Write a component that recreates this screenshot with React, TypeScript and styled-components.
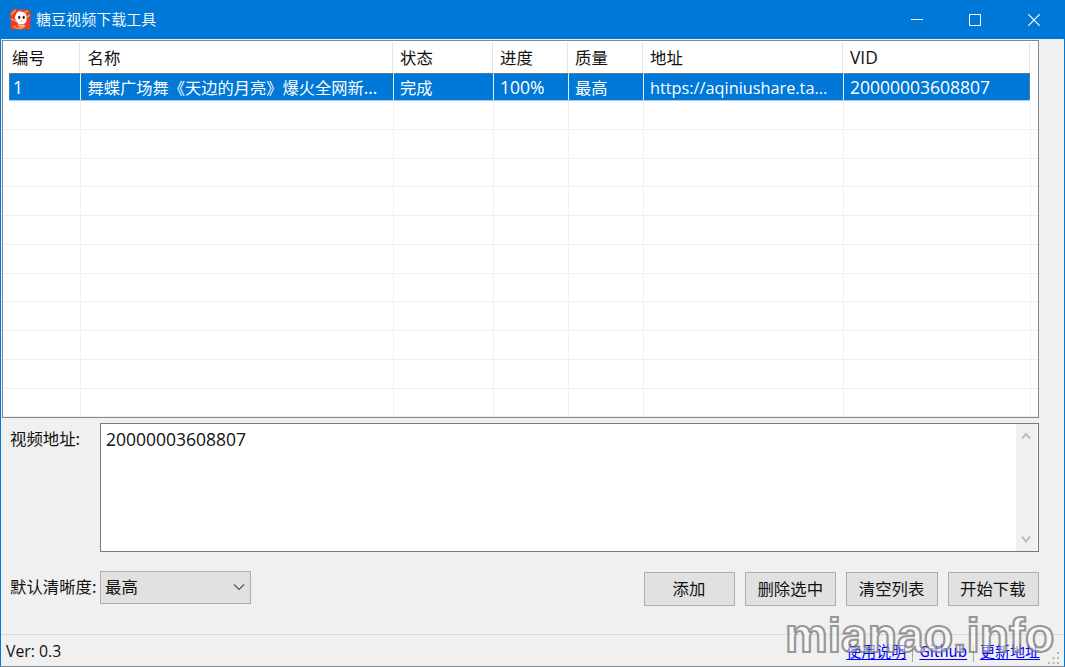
import React from "react";
import styled, { createGlobalStyle } from "styled-components";

const GlobalStyle = createGlobalStyle`
  *, *::before, *::after { box-sizing: border-box; }
  html, body { margin: 0; padding: 0; overflow: hidden; }
`;

const COLUMNS = "71px 312.5px 100px 75px 75px 200px 187px";

const Window = styled.div`
  position: relative;
  display: flex;
  flex-direction: column;
  width: 1065px;
  height: 667px;
  background: #f0f0f0;
  border: 1px solid #0078d7;
  border-top: 0;
  border-bottom-color: #8a8f94;
  font-family: "Noto Sans CJK SC", sans-serif;
  font-size: 16.4px;
  color: #111;
  white-space: nowrap;
`;

const TitleBar = styled.header`
  display: flex;
  align-items: center;
  flex: none;
  height: 39px;
  padding: 0 1px 0 9px;
  background: #0078d7;
  color: #fff;
`;

const Title = styled.h1`
  flex: 1;
  margin: 0 0 0 5px;
  font-size: 15.05px;
  font-weight: 350;
  line-height: 36px;
  height: 38px;
`;

const CaptionButton = styled.button`
  display: grid;
  place-items: center;
  width: 58.4px;
  height: 39px;
  padding: 0;
  border: 0;
  background: none;
  color: #fff;
`;

const Latin = styled.span<{ $size?: number }>`
  font-family: "Open Sans", "Noto Sans", sans-serif;
  font-size: ${(p) => p.$size ?? 17.5}px;
`;

const List = styled.section`
  flex: none;
  width: 1037px;
  height: 378px;
  margin: 1px 0 0 1px;
  border: 1px solid #828790;
  background: #fff;
  overflow: hidden;
`;

const HeaderRow = styled.div`
  display: grid;
  grid-template-columns: ${COLUMNS};
  height: 32px;
  padding: 1px 0 0 6px;
`;

const HeaderCell = styled.div`
  padding-left: 3px;
  border-right: 1px solid #e5e5e5;
  line-height: 30px;
  overflow: hidden;

  & + & { padding-left: 7.5px; }
`;

const BodyRow = styled.div<{ $selected?: boolean }>`
  display: grid;
  grid-template-columns: ${COLUMNS};
  height: ${(p) => (p.$selected ? 28 : 28.75)}px;
  margin-left: ${(p) => (p.$selected ? 6 : 0)}px;
  padding-left: ${(p) => (p.$selected ? 0 : 6)}px;
  width: ${(p) => (p.$selected ? "1021px" : "auto")};
  background: ${(p) => (p.$selected ? "#0078d7" : "#fff")};
  color: #fff;
  border-bottom: 1px solid ${(p) => (p.$selected ? "#a9cdea" : "#efefef")};
  background-clip: padding-box;
`;

const BodyCell = styled.div<{ $selected?: boolean }>`
  padding-left: 3px;
  border-right: 1px solid ${(p) => (p.$selected ? "#e4f1fb" : "#f1f1f1")};
  border-top: ${(p) => (p.$selected ? "1px dotted #b08050" : "0")};
  line-height: 26px;
  margin: 0 -1px 0 1px;
  overflow: hidden;
  font-size: 16.25px;

  & + & { padding-left: 6.5px; }
  &:nth-child(2) { padding-left: 5.5px; }
  &:first-child { margin-left: 0; border-left: ${(p) => (p.$selected ? "1px dotted #b08050" : "0")}; }
  &:last-child { border-right: 1px ${(p) => (p.$selected ? "dotted #b08050" : "solid #f1f1f1")}; margin-right: ${(p) => (p.$selected ? 0 : -1)}px; }
`;

const AddressRow = styled.section`
  display: flex;
  flex: none;
  margin-top: 5px;
  padding-left: 9px;
`;

const Label = styled.label`
  flex: none;
  width: 90px;
  line-height: 30px;
`;

const AddressBox = styled.div`
  display: flex;
  justify-content: space-between;
  width: 939px;
  height: 129px;
  border: 1px solid #7a7a7a;
  background: #fff;
`;

const AddressText = styled.div`
  padding: 0 0 0 5px;
  line-height: 30px;
`;

const ScrollTrack = styled.div`
  display: flex;
  flex-direction: column;
  justify-content: space-between;
  align-items: center;
  width: 21px;
  margin-right: 1px;
  padding: 8px 2px 8px 0;
  background: #f0f0f0;
`;

const ControlsRow = styled.section`
  display: flex;
  align-items: flex-start;
  flex: none;
  height: 82px;
  margin-right: 25px;
  padding: 19px 0 0 9px;
`;

const Select = styled.div`
  display: flex;
  align-items: center;
  justify-content: space-between;
  width: 151px;
  height: 33px;
  padding: 0 5px 2px 4px;
  border: 1px solid #adadad;
  background: #e1e1e1;
  line-height: 29px;
`;

const Buttons = styled.div`
  display: flex;
  gap: 10px;
  margin: 1px 0 0 auto;
`;

const Button = styled.button`
  width: 91.3px;
  height: 34px;
  padding: 0 1px 2px 0;
  border: 1px solid #adadad;
  background: #e1e1e1;
  color: #111;
  font: inherit;
  line-height: 28px;
`;

const StatusBar = styled.footer`
  display: flex;
  align-items: flex-start;
  justify-content: space-between;
  flex: 1;
  border-top: 1px solid #dadada;
  padding: 0 4px 0 5px;
  font-size: 15px;
`;

const Version = styled.span`
  line-height: 31px;
`;

const Links = styled.nav`
  display: flex;
  align-items: center;
  height: 31px;
`;

const Link = styled.a`
  color: #0000ff;
  font-size: 15px;
  line-height: 30px;
  text-decoration: underline 1px;
  text-underline-offset: 2px;
`;

const Divider = styled.i`
  width: 1px;
  height: 17px;
  margin: 5px 6px 0;
  background: #a8a8a8;
`;

const Grip = styled.svg`
  margin: 13px 0 0 7px;
`;

const Watermark = styled.div`
  position: absolute;
  left: 784px;
  top: 609px;
  font-family: "Liberation Sans", sans-serif;
  font-size: 48px;
  font-weight: 700;
  line-height: 54px;
  color: rgba(255, 255, 255, 0.55);
  -webkit-text-stroke: 2.2px rgba(110, 110, 110, 0.7);
  pointer-events: none;
`;

const Logo = () => (
  <svg width="21" height="21" viewBox="0 0 21 21">
    <rect x="0.5" y="0.5" width="20" height="20" rx="3.5" fill="#e93a2c" />
    <path d="M1 6C3 3 4 2 6 1M1 10c3 1 4 1 6 3M3 17c4 3 9 4 12-1M15 3l3-1M17 8l3-2" fill="none" stroke="#f5a13a" strokeWidth="1.5" />
    <path d="M6 5.5C7 2.500 10 1.500 12 3c3-.3 5 2.500 4.600 6 .7 3.500-1.600 6.500-5 6.500S7 13.500 6 11C4.500 9.500 4.600 7 6 5.500Z" fill="#fff" />
    <ellipse cx="9.200" cy="8.300" rx="1.100" ry="1.600" fill="#251718" />
    <ellipse cx="13.700" cy="8.300" rx="1.100" ry="1.600" fill="#251718" />
    <path d="m10.300 11.500 2.400 0-1.200 1.400Z" fill="#ef9c2b" />
    <path d="M8 15.500c1 2 4 2.500 6 .5" fill="none" stroke="#fbd7a8" strokeWidth="1.400" />
  </svg>
);

const Chevron = ({ up, color, width, size }: { up?: boolean; color: string; width: number; size: number }) => (
  <svg width={size} height="8" viewBox={`0 0 ${size} 8`}>
    <path
      d={up ? `M1 6.500 ${size / 2} 2l${size / 2 - 1} 4.500` : `M1 1.500 ${size / 2} 6.500l${size / 2 - 1} -5`}
      fill="none"
      stroke={color}
      strokeWidth={width}
    />
  </svg>
);

const headers = ["编号", "名称", "状态", "进度", "质量", "地址"];
const emptyRows = Array.from({ length: 11 }, (_, i) => i);
const actions = ["添加", "删除选中", "清空列表", "开始下载"];
const dots = [[10, 1], [5.5, 6], [10, 6], [1, 11], [5.5, 11], [10, 11]];

export default function App() {
  return (
    <>
      <GlobalStyle />
      <Window>
        <TitleBar>
          <Logo />
          <Title>糖豆视频下载工具</Title>
          <CaptionButton aria-label="最小化">
            <svg width="12" height="12" viewBox="0 0 12 12"><path d="M0 5.500h12" stroke="currentColor" /></svg>
          </CaptionButton>
          <CaptionButton aria-label="最大化">
            <svg width="12" height="12" viewBox="0 0 12 12"><path d="M.5.5h11v11H.5z" fill="none" stroke="currentColor" /></svg>
          </CaptionButton>
          <CaptionButton aria-label="关闭">
            <svg width="12" height="12" viewBox="0 0 12 12"><path d="m.3.3 11.400 11.400M11.700.3.3 11.700" stroke="currentColor" strokeWidth="1.200" /></svg>
          </CaptionButton>
        </TitleBar>

        <List>
          <HeaderRow>
            {headers.map((h) => <HeaderCell key={h}>{h}</HeaderCell>)}
            <HeaderCell><Latin $size={17.4}>VID</Latin></HeaderCell>
          </HeaderRow>
          <BodyRow $selected>
            <BodyCell $selected><Latin>1</Latin></BodyCell>
            <BodyCell $selected>舞蝶广场舞《天边的月亮》爆火全网新...</BodyCell>
            <BodyCell $selected>完成</BodyCell>
            <BodyCell $selected><Latin $size={17.5}>100%</Latin></BodyCell>
            <BodyCell $selected>最高</BodyCell>
            <BodyCell $selected><Latin $size={16.3}>https://aqiniushare.ta...</Latin></BodyCell>
            <BodyCell $selected><Latin>20000003608807</Latin></BodyCell>
          </BodyRow>
          {emptyRows.map((r) => (
            <BodyRow key={r}>
              {COLUMNS.split(" ").map((_, c) => <BodyCell key={c} />)}
            </BodyRow>
          ))}
        </List>

        <AddressRow>
          <Label>视频地址:</Label>
          <AddressBox>
            <AddressText><Latin>20000003608807</Latin></AddressText>
            <ScrollTrack>
              <Chevron up color="#bcbcbc" width={2} size={10} />
              <Chevron color="#bcbcbc" width={2} size={10} />
            </ScrollTrack>
          </AddressBox>
        </AddressRow>

        <ControlsRow>
          <Label>默认清晰度:</Label>
          <Select>
            最高
            <Chevron color="#555" width={1.2} size={12} />
          </Select>
          <Buttons>
            {actions.map((a) => <Button key={a}>{a}</Button>)}
          </Buttons>
        </ControlsRow>

        <StatusBar>
          <Version><Latin $size={15.8}>Ver: 0.3</Latin></Version>
          <Links>
            <Link>使用说明</Link>
            <Divider />
            <Link>Github</Link>
            <Divider />
            <Link>更新地址</Link>
            <Grip width="13" height="13" viewBox="0 0 13 13">
              {dots.map(([x, y]) => <rect key={`${x}-${y}`} x={x} y={y} width="2" height="2" fill="#b8b8b8" />)}
            </Grip>
          </Links>
        </StatusBar>
        <Watermark>mianao.info</Watermark>
      </Window>
    </>
  );
}
